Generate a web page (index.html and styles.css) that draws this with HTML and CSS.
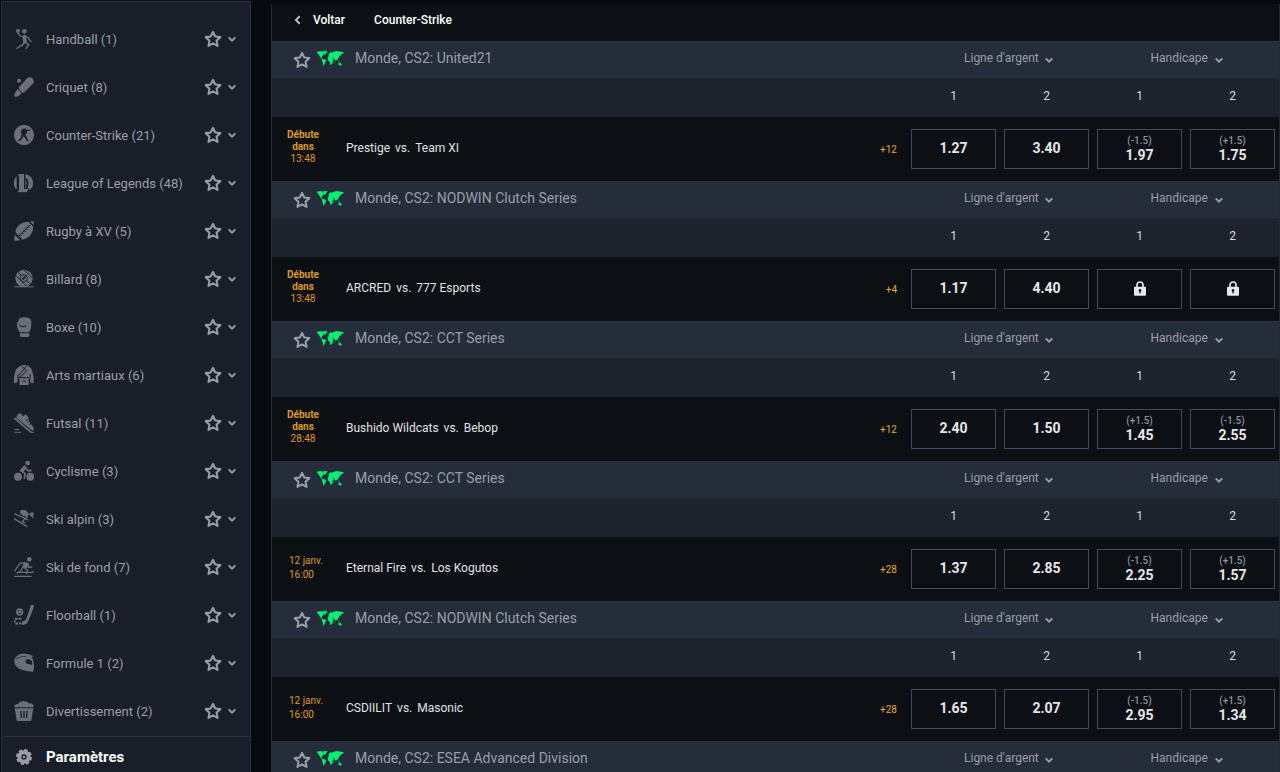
FILE: index.html
```
<!DOCTYPE html>
<html lang="fr">

<head>
    <meta charset="UTF-8">
    <meta name="viewport" content="width=device-width, initial-scale=1.0">
    <title>Counter-Strike</title>
    <link rel="stylesheet" href="styles.css">
</head>

<body>
    <!-- Icon set -->
    <svg class="icon-set" aria-hidden="true">
        <symbol id="star" viewBox="0 0 48 48">
            <path d="M24 7l5.500 11 12 1.500-9 8.500 2.500 12.500L24 34.500 13 40.500 15.500 28l-9-8.500 12-1.500z" fill="none" stroke="currentColor" stroke-width="5" stroke-linejoin="round"/>
        </symbol>
        <symbol id="chevron" viewBox="0 0 24 24">
            <path d="M4 8l8 8 8-8" fill="none" stroke="currentColor" stroke-width="4.500"/>
        </symbol>
        <symbol id="back" viewBox="0 0 24 24">
            <path d="M16 3l-9 9 9 9" fill="none" stroke="currentColor" stroke-width="4.500"/>
        </symbol>
        <symbol id="lock" viewBox="0 0 36 45">
            <path d="M9 20v-8a9 9 0 0 1 18 0v8" fill="none" stroke="currentColor" stroke-width="5"/>
            <path fill-rule="evenodd" d="M3 17h30q3 0 3 3v21q0 3-3 3H3q-3 0-3-3V20q0-3 3-3zm15 7a4 4 0 0 0-2 7.500V37h4v-5.500A4 4 0 0 0 18 24z" fill="currentColor"/>
        </symbol>
        <symbol id="world" viewBox="0 0 84 46">
            <path fill="currentColor" d="M0 3l7-2 11 0 5 2-1 5 3 1-5 5-3 4-1 4 4 4-5-2-5-9-5-7zM21 1l13-1-3 7-5 5-3-6zM18 24l7 1 6 5-4 6-3 8-3 0-1-9-3-5zM38 9l5-5 4-1-1 4 6-4 9-3 6 1 9 1 8 2-1 4-6 2-3 6-2-3-3 7-3 6-3 4-2-5-2 6-5-9-3-1 1 4-4 3-4-5-5 1-4-4 3-4zM36 20l8-2 6 5 4 3-4 5 0 5-4 6-3 0-2-9-5-4-1-5zM66 31l5 1 3 3-7-2zM67 38l7-2 4 5-2 4-8-3zM53 34l2-2v5l-2 1z"/>
        </symbol>
        <symbol id="handball" viewBox="0 0 60 60">
            <circle cx="12" cy="6" r="6" fill="currentColor"/>
            <circle cx="31" cy="7" r="7" fill="currentColor"/>
            <g fill="none" stroke="currentColor" stroke-linecap="round" stroke-linejoin="round">
                <path d="M12 13l8 9 13 1 9 2 5 8 4 5" stroke-width="4"/>
                <path d="M31 23l2 15" stroke-width="11"/>
                <path d="M30 40l-5 9-7 2-9 7M35 40l9 7-8 12" stroke-width="4.500"/>
            </g>
        </symbol>
        <symbol id="cricket" viewBox="0 0 60 60">
            <path fill="currentColor" d="M41 2q9-3 14 2 6 5 4 14L31 46q-4 3-11-4t-5-12zM11 36l13 13-12 9-8 2-4-4 3-8z"/>
            <circle cx="15" cy="11" r="6" fill="currentColor"/>
        </symbol>
        <symbol id="cs" viewBox="0 0 60 60">
            <path fill="currentColor" fill-rule="evenodd" d="M30 0a30 30 0 1 0 .1 0zM29 10l6 1 2 4 12-2v3l-10 3 0 4-4 4 0 6 5 5 3 11h-4l-4-9-7-6-4 7-7 8-4-2 7-9 3-10-3-8 4-8 6-1z"/>
        </symbol>
        <symbol id="lol" viewBox="0 0 60 60">
            <path fill="currentColor" d="M12 3h18v44h14l-6 11H10l5-8V10zM8 10v40A27 27 0 0 1 8 10zM34 4a27 27 0 0 1 14 47l-5-6H34z"/>
            <path d="M36 17q9 12 1 27" fill="none" stroke="#191e28" stroke-width="6"/>
        </symbol>
        <symbol id="rugby" viewBox="0 0 60 60">
            <path fill="currentColor" d="M43 2l15 15q0 13-8 24T26 56L4 34Q6 19 18 10T43 2zM48 1q8-1 11 0 1 4 0 11zM2 41l17 17q-10 2-18 1-1-9 1-18z"/>
            <path d="M12 48l36-36M16 38l7 7m-1-13l7 7m-1-13l7 7m-1-13l7 7m-1-13l7 7" fill="none" stroke="#191e28" stroke-width="3"/>
        </symbol>
        <symbol id="billiard" viewBox="0 0 60 60">
            <circle cx="30" cy="28" r="26" fill="currentColor"/>
            <path d="M13 10l38 37M5 19l33 33M31 3l24 24" stroke="#191e28" stroke-width="3"/>
            <circle cx="29" cy="28" r="11" fill="currentColor" stroke="#191e28" stroke-width="3"/>
            <path d="M25 32l9-9" stroke="#191e28" stroke-width="5"/>
            <path d="M1 52h58v3H1z" fill="currentColor"/>
        </symbol>
        <symbol id="boxing" viewBox="0 0 60 60">
            <path fill="currentColor" d="M18 3q12-5 26 0 9 3 8 19 0 13-6 24H17l-7-14q-4-14 3-19 0-7 5-10zM18 49h28v8q-2 3-5 3H23q-5 0-5-3z"/>
            <path d="M17 22q1 7 5 7h13v-5" fill="none" stroke="#191e28" stroke-width="3"/>
        </symbol>
        <symbol id="martial" viewBox="0 0 60 60">
            <path fill="currentColor" d="M19 2l7-2h11l6 2 10 10 6 23v19h-9l-6-20v26H16V34L8 54H0V34l6-21z"/>
            <path d="M21 1l17 17-21 19M39 1L15 31M16 38h28M12 28v16M48 28v16M26 51l4-5 6 5" fill="none" stroke="#191e28" stroke-width="3"/>
        </symbol>
        <symbol id="shoe" viewBox="0 0 60 60">
            <path fill="currentColor" d="M14 2q4-3 8 0l5 8 8-6 8 8q-1 9 6 19l10 13q2 8-4 9L7 14q-1-5 7-12zM3 13l50 43h6v4h-9L0 18zM1 48h14v3H1zM1 56h20v3H1z"/>
            <path d="M35 23l8-5M40 29l8-5M45 35l8-5" stroke="#191e28" stroke-width="3"/>
        </symbol>
        <symbol id="cycling" viewBox="0 0 60 60">
            <circle cx="12" cy="47" r="12" fill="currentColor"/>
            <circle cx="49" cy="47" r="12" fill="currentColor"/>
            <circle cx="41" cy="6" r="7" fill="currentColor"/>
            <path d="M32 17L21 29l12 9-2 16M32 17l9 12h12" fill="none" stroke="currentColor" stroke-width="5"/>
            <path d="M32 12L17 28l9 7 12-15z" fill="currentColor"/>
        </symbol>
        <symbol id="alpine" viewBox="0 0 60 60">
            <circle cx="54" cy="16" r="6" fill="currentColor"/>
            <path fill="currentColor" d="M20 3l14 0 10 9-2 9-9-2-4 3-11-9z"/>
            <path d="M1 14l42 19M0 29l40 24M24 16l16 7-15 14 8 5M45 14l13 12" fill="none" stroke="currentColor" stroke-width="4"/>
        </symbol>
        <symbol id="nordic" viewBox="0 0 60 60">
            <circle cx="46" cy="7" r="7" fill="currentColor"/>
            <path fill="currentColor" d="M37 15l8 6-6 12-15-1 4-12z"/>
            <path d="M33 17l-15 2L1 43M42 20l3 12 10-3M29 31l11 8-2 12M26 31l-8 14-10 3M0 58h53M16 46h38q5-1 4-4" fill="none" stroke="currentColor" stroke-width="4"/>
        </symbol>
        <symbol id="floorball" viewBox="0 0 60 60">
            <circle cx="17" cy="21" r="11" fill="currentColor"/>
            <path d="M12 17l3 1m5-1l3 1m-9 8l7-1" stroke="#191e28" stroke-width="3"/>
            <path fill="currentColor" d="M51 0h9l-1 8-16 40q-4 11-16 12l-6-3 5-8q8-2 11-8z"/>
            <path d="M22 41L4 42q-5 7 0 14l17-1" fill="none" stroke="currentColor" stroke-width="6" stroke-dasharray="8 3"/>
        </symbol>
        <symbol id="helmet" viewBox="0 0 60 60">
            <path fill="currentColor" fill-rule="evenodd" d="M18 3q18-5 42 7l-7 1q7 10 7 38l-3 7-19-2Q11 49 3 35-5 14 18 3zM38 19q-5 5-2 12l18 5q2-9-4-16z"/>
            <path d="M6 18q11-9 31-8" fill="none" stroke="#191e28" stroke-width="2"/>
        </symbol>
        <symbol id="popcorn" viewBox="0 0 60 60">
            <path fill="currentColor" d="M1 15q2-7 11-6 4-8 15-8 12-1 18 6 13-1 14 10v2H1zM2 22h56l-6 36q-1 2-4 2H12q-3 0-4-2z"/>
            <path d="M21 30l1 21M30 30v21M39 30l-1 21" stroke="#191e28" stroke-width="4"/>
        </symbol>
        <symbol id="gear" viewBox="0 0 48 48">
            <circle cx="24" cy="24" r="14" fill="none" stroke="currentColor" stroke-width="12"/>
            <circle cx="24" cy="24" r="20" fill="none" stroke="currentColor" stroke-width="8" stroke-dasharray="10 5.708"/>
            <circle cx="24" cy="24" r="4" fill="currentColor"/>
        </symbol>
    </svg>

    <aside class="sidebar">
        <ul class="sports" id="sports">
            <!-- Sports will be generated here -->
        </ul>
        <button class="settings">
            <svg class="settings-icon"><use href="#gear"/></svg>
            Paramètres
        </button>
    </aside>

    <main class="content">
        <nav class="topbar">
            <a href="#" class="back"><svg class="back-icon"><use href="#back"/></svg>Voltar</a>
            <h1>Counter-Strike</h1>
        </nav>
        <div id="leagues">
            <!-- Leagues will be generated here -->
        </div>
    </main>

    <script>
        const sports = [
            { icon: 'handball', name: 'Handball (1)' },
            { icon: 'cricket', name: 'Criquet (8)' },
            { icon: 'cs', name: 'Counter-Strike (21)' },
            { icon: 'lol', name: 'League of Legends (48)' },
            { icon: 'rugby', name: 'Rugby à XV (5)' },
            { icon: 'billiard', name: 'Billard (8)' },
            { icon: 'boxing', name: 'Boxe (10)' },
            { icon: 'martial', name: 'Arts martiaux (6)' },
            { icon: 'shoe', name: 'Futsal (11)' },
            { icon: 'cycling', name: 'Cyclisme (3)' },
            { icon: 'alpine', name: 'Ski alpin (3)' },
            { icon: 'nordic', name: 'Ski de fond (7)' },
            { icon: 'floorball', name: 'Floorball (1)' },
            { icon: 'helmet', name: 'Formule 1 (2)' },
            { icon: 'popcorn', name: 'Divertissement (2)' }
        ];

        // odds: [price, handicap], null = locked
        const leagues = [
            { name: 'Monde, CS2: United21', live: '13:48', teams: ['Prestige', 'Team XI'], more: 12, odds: [['1.27'], ['3.40'], ['1.97', '-1.5'], ['1.75', '+1.5']] },
            { name: 'Monde, CS2: NODWIN Clutch Series', live: '13:48', teams: ['ARCRED', '777 Esports'], more: 4, odds: [['1.17'], ['4.40'], null, null] },
            { name: 'Monde, CS2: CCT Series', live: '28:48', teams: ['Bushido Wildcats', 'Bebop'], more: 12, odds: [['2.40'], ['1.50'], ['1.45', '+1.5'], ['2.55', '-1.5']] },
            { name: 'Monde, CS2: CCT Series', date: '12 janv.', time: '16:00', teams: ['Eternal Fire', 'Los Kogutos'], more: 28, odds: [['1.37'], ['2.85'], ['2.25', '-1.5'], ['1.57', '+1.5']] },
            { name: 'Monde, CS2: NODWIN Clutch Series', date: '12 janv.', time: '16:00', teams: ['CSDIILIT', 'Masonic'], more: 28, odds: [['1.65'], ['2.07'], ['2.95', '-1.5'], ['1.34', '+1.5']] },
            { name: 'Monde, CS2: ESEA Advanced Division' }
        ];

        const icon = (id, cls) => `<svg class="${cls}" aria-hidden="true"><use href="#${id}"/></svg>`;

        const market = name => `
            <label class="market">
                <select aria-label="Marché"><option>${name}</option></select>
                ${icon('chevron', 'chevron')}
            </label>`;

        const odd = o => o
            ? `<button class="odd">${o[1] ? `<small>(${o[1]})</small>` : ''}<b>${o[0]}</b></button>`
            : `<button class="odd" aria-label="Verrouillé" disabled>${icon('lock', 'lock')}</button>`;

        const start = l => l.live
            ? `<div class="start live"><b>Débute dans</b> ${l.live}</div>`
            : `<div class="start">${l.date}<br>${l.time}</div>`;

        const match = l => `
            <div class="outcomes"><span>1</span><span>2</span><span>1</span><span>2</span></div>
            <div class="match">
                ${start(l)}
                <a href="#" class="teams"><span>${l.teams[0]}</span><span>vs.</span><span>${l.teams[1]}</span></a>
                <a href="#" class="more">+${l.more}</a>
                <div class="odds">${l.odds.map(odd).join('')}</div>
            </div>`;

        document.getElementById('sports').innerHTML = sports.map(s => `
            <li class="sport">
                ${icon(s.icon, 'sport-icon')}
                <a href="#">${s.name}</a>
                <button aria-label="Favori">${icon('star', 'star')}</button>
                <button aria-label="Ouvrir">${icon('chevron', 'chevron')}</button>
            </li>`).join('');

        document.getElementById('leagues').innerHTML = leagues.map(l => `
            <section>
                <header class="league">
                    <button aria-label="Favori">${icon('star', 'star')}</button>
                    ${icon('world', 'world')}
                    <h2>${l.name}</h2>
                    ${market("Ligne d'argent")}
                    ${market('Handicape')}
                </header>
                ${l.teams ? match(l) : ''}
            </section>`).join('');
    </script>
</body>

</html>
```
FILE: styles.css
```
* {
    box-sizing: border-box;
}

body {
    display: flex;
    gap: 20px;
    height: 100vh;
    margin: 0;
    padding: 1px 0 0 1px;
    overflow: hidden;
    font-family: Roboto, sans-serif;
    font-size: 14px;
    color: #9a9ea8;
    background-color: #070a11;
}

button,
select {
    margin: 0;
    padding: 0;
    border: 0;
    font: inherit;
    color: inherit;
    background: none;
    cursor: pointer;
}

a {
    color: inherit;
    text-decoration: none;
}

svg {
    display: block;
    flex: none;
}

.icon-set {
    position: absolute;
    width: 0;
    height: 0;
}

.star {
    width: 20px;
    height: 20px;
}

.chevron {
    width: 10px;
    height: 10px;
}

/* Sidebar */
.sidebar {
    flex: none;
    width: 250px;
    background-color: #191e28;
    border: 1px solid #2c313b;
    border-bottom: 0;
}

.sports {
    margin: 0;
    padding: 13px 0 1px;
    list-style: none;
}

.sport {
    display: flex;
    align-items: center;
    height: 48px;
    padding: 0 13px 0 12px;
}

.sport-icon {
    width: 20px;
    height: 20px;
    margin-right: 12px;
    color: #6b6f78;
}

.sport a {
    flex: 1;
    font-size: 13px;
}

.sport .star {
    margin-right: 4px;
}

.settings {
    display: flex;
    align-items: center;
    gap: 14px;
    width: 100%;
    height: 40px;
    padding: 0 14px;
    border-top: 1px solid #2c313b;
    font-size: 15px;
    font-weight: 700;
    color: #fff;
}

.settings-icon {
    width: 16px;
    height: 16px;
    color: #9a9ea8;
}

/* Main content */
.content {
    flex: 1;
    min-width: 0;
    margin-top: 3px;
    overflow: hidden;
    background-color: #0c1014;
    border: 1px solid #252934;
    border-width: 0 1px;
}

.topbar {
    display: flex;
    align-items: center;
    gap: 29px;
    height: 37px;
    padding: 0 21px 6px;
    font-size: 12px;
    font-weight: 500;
    color: #fff;
}

.topbar h1 {
    margin: 0;
    font: inherit;
}

.back {
    display: flex;
    align-items: center;
    gap: 10px;
}

.back-icon {
    width: 10px;
    height: 10px;
    color: #c0c3ca;
}

.league {
    display: flex;
    align-items: center;
    height: 37px;
    padding: 0 3px 0 20px;
    background-color: #252d3a;
    border-top: 1px solid #2c333f;
    border-bottom: 1px solid #2a303b;
}

.league h2 {
    flex: 1;
    margin: 0;
    padding-bottom: 3px;
    font-size: 14px;
    font-weight: 400;
}

.world {
    width: 28px;
    height: 15px;
    margin: 0 11px 3px 4px;
    color: #00ee72;
}

.market {
    display: flex;
    align-items: center;
    justify-content: center;
    gap: 5px;
    width: 178px;
    padding-bottom: 3px;
    font-size: 12px;
}

.market select {
    appearance: none;
}

.market .chevron {
    margin-top: 3px;
    pointer-events: none;
}

.outcomes {
    display: flex;
    align-items: center;
    justify-content: flex-end;
    gap: 8px;
    height: 39px;
    padding: 0 4px 4px 0;
    font-size: 12px;
    color: #d8dade;
    background-color: #1e242e;
}

.outcomes span {
    width: 85px;
    text-align: center;
}

.match {
    display: flex;
    align-items: center;
    height: 64px;
    padding: 0 4px 0 9px;
}

.start {
    width: 48px;
    padding: 0 0 3px 8px;
    margin-right: 17px;
    font-size: 10px;
    line-height: 14px;
    white-space: nowrap;
    color: #dc9a20;
}

.start.live {
    padding: 0 8px 5px 4px;
    line-height: 12px;
    text-align: center;
    white-space: normal;
}

.teams {
    display: flex;
    flex: 1;
    gap: 5px;
    padding-bottom: 2px;
    font-size: 12px;
    color: #e0e2e5;
}

.more {
    margin-right: 14px;
    font-size: 10px;
    color: #e5ab25;
}

.odds {
    display: flex;
    gap: 8px;
}

.odd {
    display: flex;
    flex-direction: column;
    align-items: center;
    justify-content: center;
    width: 85px;
    height: 40px;
    padding-bottom: 2px;
    border: 1px solid #454a59;
    line-height: 14px;
    color: #e6e7ea;
}

.odd small {
    font-size: 10px;
    font-weight: 500;
    color: #8d919b;
}

.lock {
    width: 12px;
    height: 15px;
}
```
